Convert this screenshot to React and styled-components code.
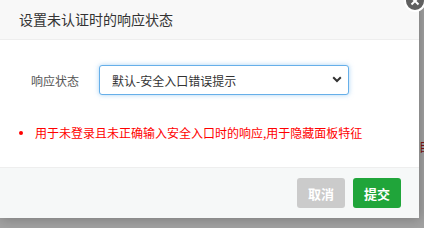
import React from "react";
import styled, { createGlobalStyle } from "styled-components";

const Global = createGlobalStyle`
  html, body { margin: 0; padding: 0; }
  body {
    width: 424px;
    height: 228px;
    overflow: hidden;
    font-family: "Noto Sans CJK SC", "Noto Sans", "Liberation Sans", sans-serif;
  }
`;

const Page = styled.div`
  position: relative;
  width: 424px;
  height: 228px;
  background: #a2a2a2;
  overflow: hidden;
`;

const Behind = styled.span`
  position: absolute;
  left: 419px;
  top: 139px;
  font-size: 12px;
  line-height: 16px;
  color: #7d1414;
`;

const Dialog = styled.div`
  position: relative;
  width: 419px;
  height: 218px;
  background: #fff;
  display: flex;
  flex-direction: column;
  box-shadow: 1px 1px 12px rgba(0, 0, 0, 0.25);
`;

const Header = styled.div`
  height: 39px;
  flex: none;
  background: #f8f8f8;
  border-bottom: 1px solid #eee;
  padding-left: 19px;
  font-size: 14px;
  line-height: 39px;
  color: #333;
`;

const Content = styled.div`
  flex: 1;
  padding-top: 25px;
  display: flex;
  flex-direction: column;
`;

const Row = styled.div`
  display: flex;
  align-items: center;
  gap: 20px;
  height: 30px;
`;

const Label = styled.label`
  width: 79px;
  text-align: right;
  font-size: 12px;
  color: #555;
`;

const SelectWrap = styled.div`
  position: relative;
  width: 250px;
  height: 30px;
`;

const Select = styled.select`
  appearance: none;
  -webkit-appearance: none;
  width: 100%;
  height: 100%;
  box-sizing: border-box;
  border: 1px solid #66afe9;
  border-radius: 3px;
  box-shadow: 0 0 5px rgba(102, 175, 233, 0.55);
  background: #fff;
  padding: 0 0 0 12px;
  font-family: inherit;
  font-size: 12px;
  color: #333;
  outline: none;
`;

const Chevron = styled.svg`
  position: absolute;
  right: 7px;
  top: 11px;
  pointer-events: none;
`;

const Tips = styled.ul`
  margin: 28px 0 0 0;
  padding: 0;
  list-style: none;
`;

const Tip = styled.li`
  display: flex;
  align-items: center;
  font-size: 12px;
  line-height: 20px;
  color: #ff0000;
  padding-left: 19px;
  &::before {
    content: "";
    width: 4px;
    height: 4px;
    border-radius: 50%;
    background: #ff0000;
    margin-right: 12px;
  }
`;

const Footer = styled.div`
  height: 50px;
  flex: none;
  border-top: 1px solid #eee;
  background: #f6f8f8;
  display: flex;
  justify-content: flex-end;
  align-items: center;
  gap: 8px;
  padding-right: 18px;
`;

const Button = styled.button`
  width: 48px;
  height: 30px;
  border: none;
  border-radius: 3px;
  background: ${(p) => (p.$primary ? "#20a53a" : "#cbcbcb")};
  color: #fff;
  font-family: inherit;
  font-size: 13px;
  font-weight: bold;
  padding: 0;
`;

const Close = styled.div`
  position: absolute;
  left: 404px;
  top: -10px;
  width: 18px;
  height: 18px;
  border: 2px solid #fff;
  border-radius: 50%;
  background: #606060;
  display: flex;
  align-items: center;
  justify-content: center;
`;

export default function App() {
  return (
    <Page>
      <Global />
      <Behind>目</Behind>
      <Dialog>
        <Header>设置未认证时的响应状态</Header>
        <Content>
          <Row>
            <Label>响应状态</Label>
            <SelectWrap>
              <Select defaultValue="0">
                <option value="0">默认-安全入口错误提示</option>
              </Select>
              <Chevron width="10" height="7" viewBox="0 0 10 7">
                <path d="M1.2 1.3 L5 5 L8.8 1.3" fill="none" stroke="#333" strokeWidth="2" />
              </Chevron>
            </SelectWrap>
          </Row>
          <Tips>
            <Tip>用于未登录且未正确输入安全入口时的响应,用于隐藏面板特征</Tip>
          </Tips>
        </Content>
        <Footer>
          <Button>取消</Button>
          <Button $primary>提交</Button>
        </Footer>
      </Dialog>
      <Close>
        <svg width="10" height="10" viewBox="0 0 10 10">
          <path d="M1.5 1.5 L8.5 8.5 M8.5 1.5 L1.5 8.5" stroke="#fff" strokeWidth="2" />
        </svg>
      </Close>
    </Page>
  );
}
